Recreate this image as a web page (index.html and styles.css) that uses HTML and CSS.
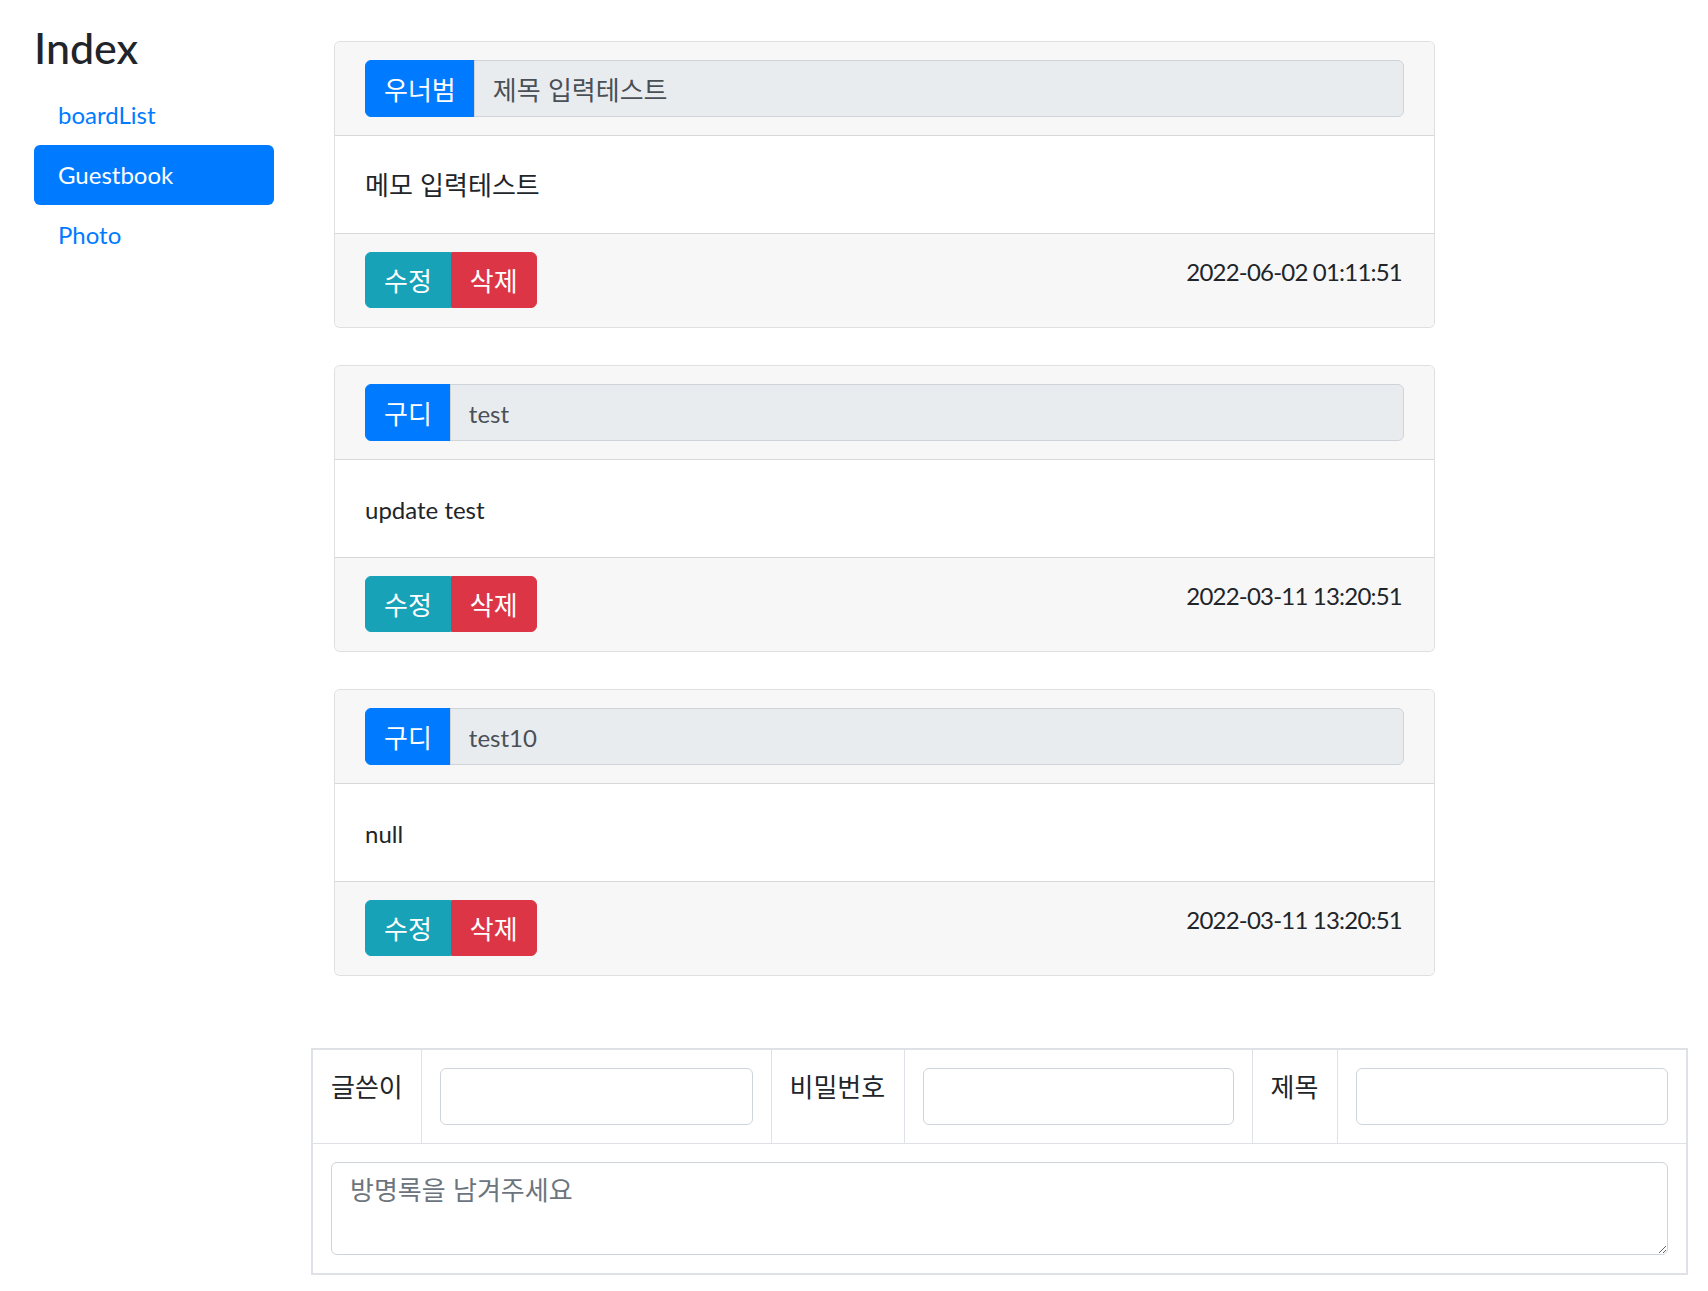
FILE: index.html
```html
<!DOCTYPE html>
<html lang="ko">
<head>
<meta charset="utf-8">
<title>Guestbook</title>
<link rel="stylesheet" href="styles.css">
</head>
<body>
<div class="page">
  <aside class="sidebar">
    <h3 class="title">Index</h3>
    <nav class="nav">
      <a class="nav-link" href="#">boardList</a>
      <a class="nav-link active" href="#">Guestbook</a>
      <a class="nav-link" href="#">Photo</a>
    </nav>
  </aside>
  <main class="main">
    <div class="cards">
      <div class="card">
        <div class="card-header">
          <div class="input-group">
            <span class="group-label ko">우너범</span>
            <input class="group-input ko" type="text" value="제목 입력테스트" readonly>
          </div>
        </div>
        <div class="card-body"><span class="ko body-ko">메모 입력테스트</span></div>
        <div class="card-footer">
          <div class="btn-group">
            <button class="btn btn-info ko" type="button">수정</button>
            <button class="btn btn-danger ko" type="button">삭제</button>
          </div>
          <span class="date">2022-06-02 01:11:51</span>
        </div>
      </div>
      <div class="card">
        <div class="card-header">
          <div class="input-group">
            <span class="group-label ko">구디</span>
            <input class="group-input" type="text" value="test" readonly>
          </div>
        </div>
        <div class="card-body">update test</div>
        <div class="card-footer">
          <div class="btn-group">
            <button class="btn btn-info ko" type="button">수정</button>
            <button class="btn btn-danger ko" type="button">삭제</button>
          </div>
          <span class="date">2022-03-11 13:20:51</span>
        </div>
      </div>
      <div class="card">
        <div class="card-header">
          <div class="input-group">
            <span class="group-label ko">구디</span>
            <input class="group-input" type="text" value="test10" readonly>
          </div>
        </div>
        <div class="card-body">null</div>
        <div class="card-footer">
          <div class="btn-group">
            <button class="btn btn-info ko" type="button">수정</button>
            <button class="btn btn-danger ko" type="button">삭제</button>
          </div>
          <span class="date">2022-03-11 13:20:51</span>
        </div>
      </div>
    </div>
    <form class="write-form">
      <table class="form-table">
        <tr>
          <td class="label-cell w-writer"><span class="ko">글쓴이</span></td>
          <td class="input-cell w-in1"><input class="form-control" type="text"></td>
          <td class="label-cell w-pass"><span class="ko">비밀번호</span></td>
          <td class="input-cell w-in2"><input class="form-control" type="password"></td>
          <td class="label-cell w-subj"><span class="ko">제목</span></td>
          <td class="input-cell w-in3"><input class="form-control" type="text"></td>
        </tr>
        <tr>
          <td class="area-cell" colspan="6"><textarea class="form-area ko" rows="2" placeholder="방명록을 남겨주세요"></textarea></td>
        </tr>
      </table>
    </form>
  </main>
</div>
</body>
</html>
```

FILE: styles.css
```css
* { box-sizing: border-box; }

html, body {
  margin: 0;
  padding: 0;
  background: #fff;
}

body {
  font-family: "Lato", "Noto Sans CJK KR", sans-serif;
  font-size: 24px;
  line-height: 1.5;
  color: #212529;
}

.ko {
  font-family: "Noto Sans CJK KR", sans-serif;
  font-size: 26px;
}

.page {
  display: flex;
  align-items: flex-start;
}

.sidebar {
  flex: none;
  width: 240px;
  margin-left: 34px;
  padding-top: 23px;
}

.title {
  margin: 0 0 12px 0;
  font-size: 43px;
  line-height: 50px;
  font-weight: 500;
  color: #212529;
}

.nav {
  display: flex;
  flex-direction: column;
}

.nav-link {
  display: block;
  padding: 12px 24px;
  line-height: 36px;
  color: #007bff;
  text-decoration: none;
  border-radius: 6px;
}

.nav-link.active {
  background: #007bff;
  color: #fff;
}

.main {
  flex: none;
  margin-left: 37px;
  padding-top: 41px;
}

.cards {
  margin-left: 23px;
  width: 1101px;
}

.card {
  border: 1px solid rgba(0, 0, 0, 0.125);
  border-radius: 6px;
  margin-bottom: 37px;
  background: #fff;
  overflow: hidden;
}

.card-header {
  padding: 18px 30px;
  background: #f7f7f7;
  border-bottom: 1px solid rgba(0, 0, 0, 0.125);
}

.input-group {
  display: flex;
  height: 57px;
}

.group-label {
  display: flex;
  align-items: center;
  padding: 0 18px;
  background: #007bff;
  border: 1px solid #007bff;
  border-radius: 6px 0 0 6px;
  color: #fff;
}

.group-input {
  flex: 1;
  min-width: 0;
  margin: 0 0 0 -1px;
  padding: 2px 18px 0;
  font-family: "Lato", "Noto Sans CJK KR", sans-serif;
  font-size: 24px;
  color: #495057;
  background: #e9ecef;
  border: 1px solid #ced4da;
  border-radius: 0 6px 6px 0;
  outline: none;
}

.group-input.ko {
  padding-top: 0;
  font-family: "Noto Sans CJK KR", sans-serif;
  font-size: 26px;
}

.card-body {
  padding: 32px 30px 28px;
  height: 97px;
  line-height: 36px;
}

.body-ko {
  position: relative;
  top: -2px;
}

.card-footer {
  display: flex;
  justify-content: space-between;
  align-items: flex-start;
  padding: 18px 30px 19px;
  background: #f7f7f7;
  border-top: 1px solid rgba(0, 0, 0, 0.125);
}

.btn-group {
  display: flex;
}

.btn {
  height: 56px;
  padding: 0 18px;
  line-height: 36px;
  color: #fff;
  border: 1px solid transparent;
  cursor: pointer;
}

.btn-info {
  background: #17a2b8;
  border-color: #17a2b8;
  border-radius: 6px 0 0 6px;
}

.btn-danger {
  background: #dc3545;
  border-color: #dc3545;
  border-radius: 0 6px 6px 0;
}

.date {
  margin-top: 2px;
  line-height: 36px;
  letter-spacing: -0.8px;
  margin-right: 2px;
}

.write-form {
  margin-top: 72px;
}

.form-table {
  border-collapse: collapse;
  border: 2px solid #dee2e6;
  width: 1375px;
  table-layout: fixed;
}

.form-table td {
  border: 1px solid #dee2e6;
  padding: 18px;
  vertical-align: top;
  line-height: 36px;
}

.label-cell {
  white-space: nowrap;
  overflow: visible;
}

.w-writer { width: 109px; }
.w-in1 { width: 350px; }
.w-pass { width: 133px; }
.w-in2 { width: 348px; }
.w-subj { width: 85px; }
.w-in3 { width: 350px; }

.form-control {
  display: block;
  width: 100%;
  height: 57px;
  padding: 0 18px;
  font-family: "Lato", sans-serif;
  font-size: 24px;
  color: #495057;
  background: #fff;
  border: 1px solid #ced4da;
  border-radius: 6px;
}

.form-area {
  display: block;
  width: 100%;
  height: 93px;
  padding: 8px 18px;
  line-height: 36px;
  color: #495057;
  background: #fff;
  border: 1px solid #ced4da;
  border-radius: 6px;
  resize: vertical;
}

.form-area::placeholder {
  color: #6c757d;
  opacity: 1;
}
```
